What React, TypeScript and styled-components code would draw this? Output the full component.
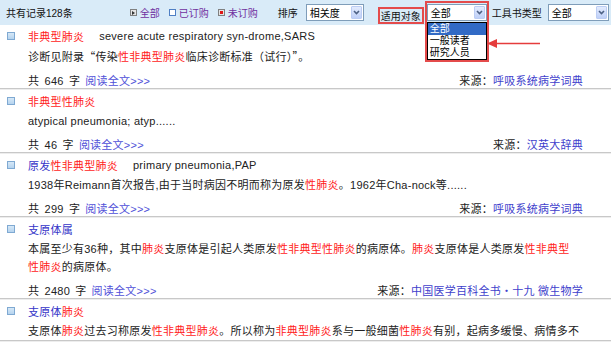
import React from 'react'
import styled, { createGlobalStyle } from 'styled-components'

const GlobalStyle = createGlobalStyle`
  html, body {
    margin: 0;
    padding: 0;
    background: #fff;
  }
  body {
    font-family: "Liberation Sans", "Noto Sans CJK SC", sans-serif;
    color: #222;
  }
`

const Page = styled.div`
  width: 611px;
  position: relative;
  overflow: hidden;
`

const Header = styled.div`
  height: 25px;
  background: #d9ebf8;
  display: flex;
  align-items: center;
  padding-left: 6px;
  font-size: 10px;
  color: #111;
`

const Count = styled.span`
  white-space: nowrap;
`

const Filters = styled.div`
  display: flex;
  align-items: center;
  gap: 9px;
  margin-left: 57px;
`

const Filter = styled.span`
  display: flex;
  align-items: center;
  color: #7030a0;
  white-space: nowrap;
`

const FilterBox = styled.span<{ $kind: 'all' | 'on' | 'off' }>`
  width: 7px;
  height: 7px;
  box-sizing: border-box;
  margin-right: 3px;
  position: relative;
  border: 1px solid ${(p) => (p.$kind === 'on' ? '#4f7fc4' : '#808080')};
  background: ${(p) => (p.$kind === 'on' ? '#fff' : '#e4e4e4')};

  &::after {
    content: '';
    position: absolute;
    display: ${(p) => (p.$kind === 'on' ? 'none' : 'block')};
    ${(p) =>
      p.$kind === 'off'
        ? 'left: 1px; top: 1px; width: 3px; height: 3px; background: #e01818;'
        : 'left: 1px; top: 0.5px; width: 0; height: 0; border-left: 3px solid #333; border-top: 2px solid transparent; border-bottom: 2px solid transparent;'}
  }
`

const Label = styled.span<{ $ml: number }>`
  margin-left: ${(p) => p.$ml}px;
  white-space: nowrap;
`

const MarkedLabel = styled.span`
  margin-left: 14px;
  margin-top: 6px;
  height: 17px;
  box-sizing: border-box;
  border: 2px solid #e44b4b;
  padding: 0 1px;
  display: flex;
  align-items: center;
  white-space: nowrap;
`

const SelectWrap = styled.div<{ $ml: number }>`
  position: relative;
  margin-left: ${(p) => p.$ml}px;
`

const Select = styled.div<{ $w: number }>`
  width: ${(p) => p.$w}px;
  height: 17px;
  box-sizing: border-box;
  border: 1px solid #7f9db9;
  background: #fff;
  display: flex;
  align-items: center;
  justify-content: space-between;
  padding: 1px 1px 1px 3px;
  font-size: 10px;
  color: #000;
`

const ArrowBtn = styled.span`
  width: 11px;
  height: 13px;
  box-sizing: border-box;
  border: 1px solid #bccdf4;
  border-radius: 1px;
  background: linear-gradient(#e3ebfd, #bfd0f8);
  display: flex;
  align-items: center;
  justify-content: center;
`

const Highlight = styled.span`
  position: absolute;
  left: -2px;
  top: -3px;
  width: calc(100% + 4px);
  height: 61px;
  box-sizing: border-box;
  border: 2px solid #e44b4b;
  pointer-events: none;
`

const Dropdown = styled.ul`
  position: absolute;
  left: 0;
  top: 18px;
  width: 100%;
  box-sizing: border-box;
  margin: 0;
  padding: 0;
  list-style: none;
  border: 1px solid #000;
  background: #fff;
  font-size: 10px;
  color: #000;
  z-index: 2;
`

const Option = styled.li<{ $active?: boolean }>`
  height: 12px;
  line-height: 12px;
  padding-left: 2px;
  background: ${(p) => (p.$active ? '#316ac5' : '#fff')};
  color: ${(p) => (p.$active ? '#fff' : '#000')};
`

const Pointer = styled.svg`
  position: absolute;
  left: 487px;
  top: 38px;
`

const Entry = styled.div`
  border-bottom: 1px solid #c8c8c8;
  box-shadow: 0 1px 0 #ededed;
  margin-bottom: 1px;
  font-size: 11px;
  letter-spacing: 0.25px;
`

const TitleRow = styled.div`
  height: 22px;
  display: flex;
  align-items: center;
  padding-left: 7px;
  white-space: nowrap;
`

const Bullet = styled.span`
  width: 8px;
  height: 8px;
  box-sizing: border-box;
  border: 1px solid #7fa9d2;
  background: linear-gradient(#d6e8f7, #b5d3ee);
  margin-right: 13px;
`

const English = styled.span`
  margin-left: 15px;
  color: #222;
`

const Body = styled.div`
  padding: 0 0 0 28px;
  line-height: 18px;
  color: #222;
  white-space: nowrap;
`

const Quote = styled.span`
  font-family: "Noto Sans CJK SC", sans-serif;
`

const Meta = styled.div`
  margin-top: 6px;
  height: 16px;
  display: flex;
  align-items: center;
  justify-content: space-between;
  padding: 0 28px;
  color: #222;
  white-space: nowrap;
`

const Words = styled.span`
  word-spacing: 2px;
`

const ReadMore = styled.span`
  color: #5050d8;
  margin-left: 5px;
`

const SourceLink = styled.span`
  color: #4040cc;
`

const Red = styled.span`
  color: #ff1a1a;
`

const Blue = styled.span`
  color: #3434c8;
`

// curly quotes come from the CJK font so they sit a little wider
function quoted(text: string, key: number) {
  return text.split(/([“”])/).filter(Boolean).map((bit, i) =>
    bit === '“' || bit === '”' ? <Quote key={`${key}-${i}`}>{bit}</Quote> : <React.Fragment key={`${key}-${i}`}>{bit}</React.Fragment>
  )
}

// {…} marks red text, the rest takes the base colour
function marked(text: string, title: boolean) {
  return text.split(/(\{[^}]*\})/).filter(Boolean).map((part, i) => {
    if (part.startsWith('{')) return <Red key={i}>{part.slice(1, -1)}</Red>
    return title ? <Blue key={i}>{part}</Blue> : quoted(part, i)
  })
}

// one string per visual line of the summary
const entries = [
  {
    title: '{非典型肺炎}',
    english: 'severe acute respiratory syn-drome,SARS',
    body: ['诊断见附录“传染{性非典型肺炎}临床诊断标准（试行）”。'],
    count: 646,
    source: '呼吸系统病学词典',
  },
  {
    title: '{非典型性肺炎}',
    body: ['atypical pneumonia; atyp......'],
    count: 46,
    source: '汉英大辞典',
  },
  {
    title: '原发{性非典型肺炎}',
    english: 'primary pneumonia,PAP',
    body: ['1938年Reimann首次报告,由于当时病因不明而称为原发{性肺炎}。1962年Cha-nock等......'],
    count: 299,
    source: '呼吸系统病学词典',
  },
  {
    title: '支原体属',
    body: [
      '本属至少有36种，其中{肺炎}支原体是引起人类原发{性非典型性肺炎}的病原体。{肺炎}支原体是人类原发{性非典型}',
      '{性肺炎}的病原体。',
    ],
    count: 2480,
    source: '中国医学百科全书・十九 微生物学',
  },
  {
    title: '支原体{肺炎}',
    body: ['支原体{肺炎}过去习称原发{性非典型肺炎}。所以称为{非典型肺炎}系与一般细菌{性肺炎}有别，起病多缓慢、病情多不'],
  },
]

function Chevron() {
  return (
    <svg width="7" height="5" viewBox="0 0 7 5">
      <path d="M1 1 L3.5 3.5 L6 1" fill="none" stroke="#4d6185" strokeWidth="1.6" />
    </svg>
  )
}

export default function App() {
  return (
    <Page>
      <GlobalStyle />
      <Header>
        <Count>共有记录128条</Count>
        <Filters>
          <Filter>
            <FilterBox $kind="all" />
            全部
          </Filter>
          <Filter>
            <FilterBox $kind="on" />
            已订购
          </Filter>
          <Filter>
            <FilterBox $kind="off" />
            未订购
          </Filter>
        </Filters>
        <Label $ml={20}>排序</Label>
        <SelectWrap $ml={8}>
          <Select $w={58}>
            相关度
            <ArrowBtn>
              <Chevron />
            </ArrowBtn>
          </Select>
        </SelectWrap>
        <MarkedLabel>适用对象</MarkedLabel>
        <SelectWrap $ml={3}>
          <Select $w={60}>
            全部
            <ArrowBtn>
              <Chevron />
            </ArrowBtn>
          </Select>
          <Dropdown>
            <Option $active>全部</Option>
            <Option>一般读者</Option>
            <Option>研究人员</Option>
          </Dropdown>
          <Highlight />
        </SelectWrap>
        <Label $ml={5}>工具书类型</Label>
        <SelectWrap $ml={6}>
          <Select $w={61}>
            全部
            <ArrowBtn>
              <Chevron />
            </ArrowBtn>
          </Select>
        </SelectWrap>
      </Header>

      {entries.map((e, i) => (
        <Entry key={i}>
          <TitleRow>
            <Bullet />
            {marked(e.title, true)}
            {e.english && <English>{e.english}</English>}
          </TitleRow>
          {e.body.map((line, j) => (
            <Body key={j}>{marked(line, false)}</Body>
          ))}
          {e.count !== undefined && (
            <Meta>
              <span>
                <Words>共 {e.count} 字</Words>
                <ReadMore>阅读全文&gt;&gt;&gt;</ReadMore>
              </span>
              <span>
                来源：<SourceLink>{e.source}</SourceLink>
              </span>
            </Meta>
          )}
        </Entry>
      ))}

      <Pointer width="54" height="11" viewBox="0 0 54 11">
        <path d="M0 5.5 L10 1 L10 10 Z" fill="#e53c3c" />
        <line x1="9" y1="5.5" x2="53" y2="5.5" stroke="#e53c3c" strokeWidth="1.6" />
      </Pointer>
    </Page>
  )
}
